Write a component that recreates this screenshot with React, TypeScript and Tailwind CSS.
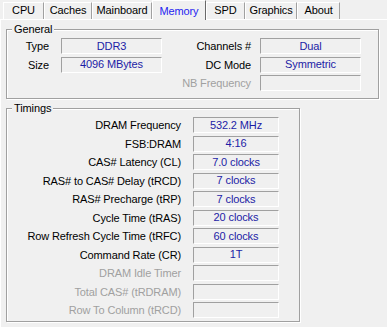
import React from "react";

const tabs = [
  { name: "CPU", w: "w-[41px]" },
  { name: "Caches", w: "w-[48px]" },
  { name: "Mainboard", w: "w-[60px]" },
  { name: "Memory", w: "w-[54px]", active: true },
  { name: "SPD", w: "w-[39px]" },
  { name: "Graphics", w: "w-[52px]" },
  { name: "About", w: "w-[43px]" },
];

function Box({ value, w }: { value?: string; w: string }) {
  return (
    <div
      className={`${w} h-[16px] border border-t-[#a0a0a0] border-l-[#a0a0a0] border-b-white border-r-white flex items-center justify-center text-[#1c1ca6] leading-none`}
    >
      {value}
    </div>
  );
}

function Group({
  title,
  className,
  children,
}: {
  title: string;
  className: string;
  children: React.ReactNode;
}) {
  return (
    <div
      className={`relative border border-[#a0a0a0] shadow-[1px_1px_0_#ffffff,inset_1px_1px_0_#ffffff] ${className}`}
    >
      <span className="absolute left-[5px] top-[-8px] bg-[#f0f0f0] px-[2px] leading-[14px] text-black">
        {title}
      </span>
      {children}
    </div>
  );
}

const timings: { label: string; value?: string; off?: boolean }[] = [
  { label: "DRAM Frequency", value: "532.2 MHz" },
  { label: "FSB:DRAM", value: "4:16" },
  { label: "CAS# Latency (CL)", value: "7.0 clocks" },
  { label: "RAS# to CAS# Delay (tRCD)", value: "7 clocks" },
  { label: "RAS# Precharge (tRP)", value: "7 clocks" },
  { label: "Cycle Time (tRAS)", value: "20 clocks" },
  { label: "Row Refresh Cycle Time (tRFC)", value: "60 clocks" },
  { label: "Command Rate (CR)", value: "1T" },
  { label: "DRAM Idle Timer", off: true },
  { label: "Total CAS# (tRDRAM)", off: true },
  { label: "Row To Column (tRCD)", off: true },
];

export default function App() {
  return (
    <div
      className="w-[387px] h-[327px] bg-[#f0f0f0] text-[11px] tracking-[-0.12px] text-black overflow-hidden flex flex-col"
      style={{ fontFamily: '"Liberation Sans", Arial, sans-serif' }}
    >
      {/* tab strip */}
      <div className="h-[19px] flex items-end pl-[3px]">
        {tabs.map((t) =>
          t.active ? (
            <div
              key={t.name}
              className={`${t.w} h-[20px] mb-[-1px] relative z-10 bg-[#f0f0f0] border-l border-t border-r border-l-white border-t-white border-r-[#696969] flex items-start justify-center pt-[2px] text-[#2424f0]`}
            >
              {t.name}
            </div>
          ) : (
            <div
              key={t.name}
              className={`${t.w} h-[17px] bg-[#f0f0f0] border-l border-t border-r border-l-white border-t-white border-r-[#a0a0a0] flex items-center justify-center pb-[1px]`}
            >
              {t.name}
            </div>
          )
        )}
      </div>
      {/* panel */}
      <div className="flex-1 border-t border-l border-white pl-[5px] pt-[9px] flex flex-col">
        <Group title="General" className="w-[373px] h-[70px] pt-[8px]">
          <div className="flex flex-col gap-[2px]">
            <div className="flex items-center">
              <div className="w-[42px] text-right">Type</div>
              <div className="ml-[12px]">
                <Box w="w-[101px]" value="DDR3" />
              </div>
              <div className="w-[89px] text-right">Channels #</div>
              <div className="ml-[9px]">
                <Box w="w-[101px]" value="Dual" />
              </div>
            </div>
            <div className="flex items-center">
              <div className="w-[42px] text-right">Size</div>
              <div className="ml-[12px]">
                <Box w="w-[101px]" value="4096 MBytes" />
              </div>
              <div className="w-[89px] text-right">DC Mode</div>
              <div className="ml-[9px]">
                <Box w="w-[101px]" value="Symmetric" />
              </div>
            </div>
            <div className="flex items-center">
              <div className="w-[42px]" />
              <div className="ml-[12px] w-[101px]" />
              <div className="w-[89px] text-right text-[#a0a0a0] whitespace-nowrap">
                NB Frequency
              </div>
              <div className="ml-[9px]">
                <Box w="w-[101px]" />
              </div>
            </div>
          </div>
        </Group>
        <Group title="Timings" className="mt-[9px] w-[294px] h-[214px] pt-[8px]">
          <div className="flex flex-col gap-[2px]">
            {timings.map((r) => (
              <div key={r.label} className="flex items-center">
                <div
                  className={`w-[174px] text-right whitespace-nowrap ${
                    r.off ? "text-[#a0a0a0]" : "text-black"
                  }`}
                >
                  {r.label}
                </div>
                <div className="ml-[12px]">
                  <Box w="w-[86px]" value={r.value} />
                </div>
              </div>
            ))}
          </div>
        </Group>
      </div>
    </div>
  );
}
